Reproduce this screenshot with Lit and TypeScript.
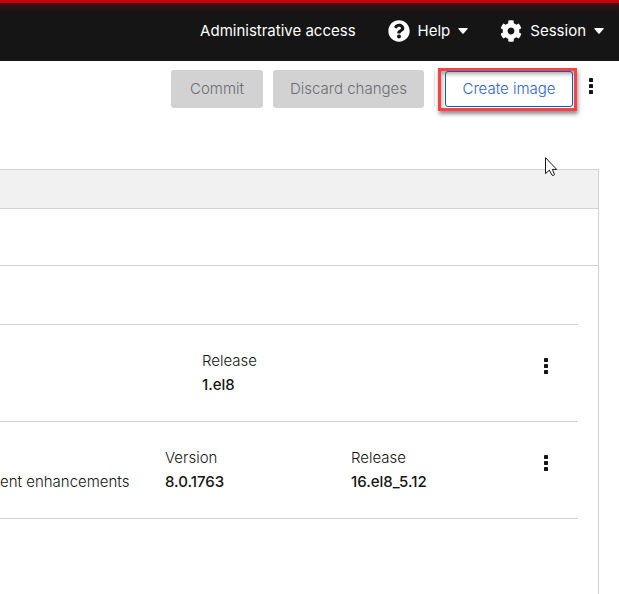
import { LitElement, html, css, svg } from "lit";
import { customElement } from "lit/decorators.js";

interface Field {
  label: string;
  value: string;
}

interface Entry {
  description: string;
  layout: string;
  fields: Field[];
}

const entries: Entry[] = [
  { description: "", layout: "short", fields: [{ label: "Release", value: "1.el8" }] },
  {
    description: "ent enhancements",
    layout: "full",
    fields: [
      { label: "Version", value: "8.0.1763" },
      { label: "Release", value: "16.el8_5.12" },
    ],
  },
];

const caret = html`<svg width="10" height="6" viewBox="0 0 10 6" aria-hidden="true">
  ${svg`<path fill="currentColor" d="M1 0h8q1 .3.5 1L5.600 5.600q-.6.600-1.200 0L.5 1Q0 .3 1 0z"/>`}
</svg>`;

const helpIcon = html`<svg width="22" height="22" viewBox="0 0 512 512" aria-hidden="true">
  <path fill="currentColor" d="M504 256c0 136.997-111.043 248-248 248S8 392.997 8 256C8 119.083 119.043 8 256 8s248 111.083 248 248zM262.655 90c-54.497 0-89.255 22.957-116.549 63.758-3.536 5.286-2.353 12.415 2.715 16.258l34.699 26.310c5.205 3.947 12.621 3.008 16.665-2.122 17.864-22.658 30.113-35.797 57.303-35.797 20.429 0 45.698 13.148 45.698 32.958 0 14.976-12.363 22.667-32.534 33.976C247.128 238.528 216 254.941 216 296v4c0 6.627 5.373 12 12 12h56c6.627 0 12-5.373 12-12v-1.333c0-28.462 83.186-29.647 83.186-106.667 0-58.002-60.165-102-116.531-102zM256 338c-25.365 0-46 20.635-46 46 0 25.364 20.635 46 46 46s46-20.636 46-46c0-25.365-20.635-46-46-46z"/>
</svg>`;

const gearIcon = html`<svg width="22" height="22" viewBox="0 0 512 512" aria-hidden="true">
  <path fill="currentColor" d="M487.4 315.700l-42.600-24.600c4.300-23.200 4.300-47 0-70.200l42.600-24.600c4.900-2.800 7.100-8.600 5.500-14-11.100-35.600-30-67.800-54.700-94.600-3.800-4.100-10-5.100-14.800-2.300L380.800 110c-17.900-15.400-38.500-27.300-60.800-35.100V25.800c0-5.600-3.900-10.500-9.400-11.700-36.700-8.200-74.300-7.800-109.200 0-5.500 1.200-9.400 6.100-9.400 11.700V75c-22.200 7.900-42.800 19.800-60.800 35.100L88.700 85.500c-4.900-2.800-11-1.900-14.800 2.300-24.700 26.700-43.600 58.900-54.700 94.600-1.700 5.400.6 11.200 5.500 14L67.300 221c-4.300 23.200-4.300 47 0 70.200l-42.600 24.600c-4.900 2.800-7.100 8.600-5.500 14 11.100 35.600 30 67.800 54.700 94.600 3.800 4.100 10 5.100 14.800 2.300l42.600-24.600c17.900 15.400 38.500 27.300 60.800 35.100v49.200c0 5.600 3.900 10.500 9.400 11.700 36.700 8.200 74.300 7.800 109.200 0 5.500-1.200 9.400-6.100 9.400-11.700v-49.200c22.200-7.900 42.800-19.800 60.800-35.100l42.600 24.600c4.900 2.800 11 1.900 14.800-2.300 24.700-26.700 43.600-58.900 54.700-94.600 1.500-5.500-.7-11.300-5.600-14.100zM256 336c-44.100 0-80-35.900-80-80s35.900-80 80-80 80 35.900 80 80-35.900 80-80 80z"/>
</svg>`;

const dots = html`<svg width="4" height="16" viewBox="0 0 4 16" aria-hidden="true">
  <rect width="4" height="4" rx="0.4" fill="currentColor"/>
  <rect y="6" width="4" height="4" rx="0.4" fill="currentColor"/>
  <rect y="12" width="4" height="4" rx="0.4" fill="currentColor"/>
</svg>`;

@customElement("app-root")
export class AppRoot extends LitElement {
  static styles = css`
    :host {
      display: flex;
      flex-direction: column;
      min-height: 100vh;
      background: #fff;
      color: #151515;
      font: 300 15px/24px Inter, "Open Sans", sans-serif;
    }
    * {
      box-sizing: border-box;
    }
    svg {
      display: block;
    }
    button {
      margin: 0;
      padding: 0;
      border: 0;
      background: none;
      color: inherit;
      font: inherit;
      white-space: nowrap;
    }
    .masthead {
      display: flex;
      justify-content: flex-end;
      align-items: center;
      gap: 32px;
      height: 61px;
      padding: 0 15px 2px 0;
      border-top: 3px solid #c9000a;
      background: linear-gradient(#3d1115, #151515 10px);
      color: #fff;
      font-weight: 400;
    }
    .menu {
      display: flex;
      align-items: center;
      gap: 8px;
    }
    .toolbar {
      display: flex;
      justify-content: flex-end;
      align-items: center;
      gap: 10px;
      padding: 9px 26px 0 0;
    }
    .action {
      height: 38px;
      border-radius: 3px;
      background: #d2d2d2;
      color: #6a6e73;
    }
    .commit {
      width: 92px;
    }
    .discard {
      width: 151px;
    }
    .create-group {
      display: flex;
      align-items: center;
      gap: 3px;
      height: 38px;
    }
    .create-group::before {
      content: "";
      width: 1px;
      height: 36px;
      background: #e4e4e4;
    }
    .highlight {
      padding: 0 1px 1px 4px;
      border: 3px solid #fa4242;
      box-shadow: 1px 3px 4px rgb(0 0 0 / 45%), inset 1px 3px 4px rgb(0 0 0 / 35%);
    }
    .create {
      display: block;
      width: 128px;
      height: 36px;
      border: 1px solid #0a5cc0;
      border-radius: 3px;
      color: #2b67c9;
    }
    .toolbar .kebab {
      margin: 0 0 6px 2px;
    }
    .panel {
      flex: 1;
      margin: 61px 20px 0 0;
      border: solid #d2d2d2;
      border-width: 1px 1px 0 0;
    }
    .band {
      height: 39px;
      border-bottom: 1px solid #d2d2d2;
      background: #f1f1f1;
    }
    .filters {
      height: 57px;
      border-bottom: 1px solid #d2d2d2;
    }
    .list {
      margin: 58px 20px 0 0;
      padding: 0;
      border-top: 1px solid #d2d2d2;
      list-style: none;
    }
    .entry {
      display: grid;
      min-height: 97px;
      padding: 24px 30px 24px 0;
      border-bottom: 1px solid #d2d2d2;
    }
    .short {
      grid-template-columns: 202px 1fr auto;
    }
    .full {
      grid-template-columns: 165px 186px 1fr auto;
    }
    .description {
      margin: 24px 0 0;
      white-space: nowrap;
    }
    .fields {
      display: contents;
    }
    .label,
    .value {
      margin: 0;
    }
    .value {
      font-weight: 500;
    }
    .entry .kebab {
      align-self: start;
      margin-top: 9px;
    }
    .pointer {
      position: absolute;
      top: 157px;
      right: 61px;
    }
  `;

  render() {
    return html`
      <header class="masthead">
        <button class="menu">Administrative access</button>
        <button class="menu">${helpIcon}<span>Help</span>${caret}</button>
        <button class="menu">${gearIcon}<span>Session</span>${caret}</button>
      </header>
      <div class="toolbar">
        <button class="action commit" disabled>Commit</button>
        <button class="action discard" disabled>Discard changes</button>
        <div class="create-group">
          <div class="highlight"><button class="create">Create image</button></div>
        </div>
        <button class="kebab" aria-label="More actions">${dots}</button>
      </div>
      <main class="panel">
        <div class="band"></div>
        <div class="filters"></div>
        <ul class="list">
          ${entries.map(
            (entry) => html`<li class="entry ${entry.layout}">
              <p class="description">${entry.description}</p>
              <dl class="fields">
                ${entry.fields.map(
                  (field) => html`<div>
                    <dt class="label">${field.label}</dt>
                    <dd class="value">${field.value}</dd>
                  </div>`
                )}
              </dl>
              <button class="kebab" aria-label="Package actions">${dots}</button>
            </li>`
          )}
        </ul>
      </main>
      <svg class="pointer" width="13" height="20" viewBox="0 0 13 20" aria-hidden="true">
        <path
          d="M.5.7v16l3.800-3.600 2.700 5q1 1 2.500-.4L7.400 12.400h4.300z"
          fill="#fff"
          stroke="#151525"
        />
      </svg>
    `;
  }
}
